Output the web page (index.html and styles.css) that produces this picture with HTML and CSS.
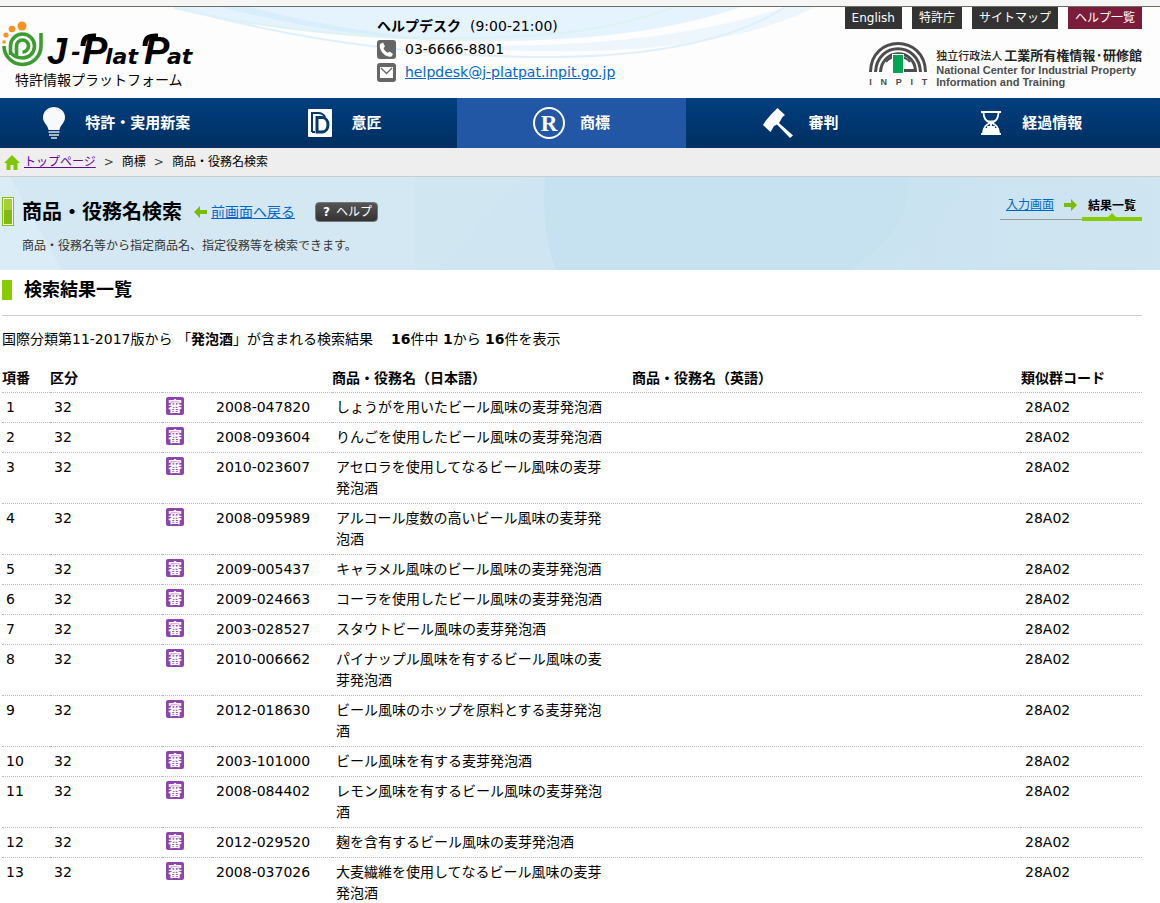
FILE: index.html
```html
<!DOCTYPE html>
<html lang="ja">
<head>
<meta charset="utf-8">
<title>商品・役務名検索 結果一覧 | J-PlatPat</title>
<link rel="stylesheet" href="styles.css">
</head>
<body>
<header class="header">
  <svg class="header-wave" viewBox="0 0 700 60" aria-hidden="true">
    <path d="M12 0C120 26 220 35 340 34C450 33 520 20 582 0Z" fill="#e4f3fd"/>
    <path d="M60 0C140 20 200 29 270 33C200 24 140 14 90 0Z" fill="#d8eefb"/>
    <path d="M14 1C110 24 220 33 320 31S470 16 515 0" fill="none" stroke="#dff2f2" stroke-width="2"/>
    <path d="M270 37C380 42 520 36 625 0H655C560 50 380 50 270 37Z" fill="#eef6fd"/>
    <path d="M20 1C150 37 280 50 390 50S580 30 625 0" fill="none" stroke="#dff0fc" stroke-width="2"/>
  </svg>
  <a class="brand" href="#" aria-label="J-PlatPat">
    <svg class="brand-logo" width="196" height="50" viewBox="0 0 196 50" aria-hidden="true">
      <g fill="#f7931e"><circle cx="22" cy="6" r="4.500"/><circle cx="12" cy="9" r="3.300"/><circle cx="6" cy="15" r="2.600"/><circle cx="4" cy="22" r="1.800"/></g>
      <g fill="none" stroke="#3b9c2f" stroke-width="3.600">
        <path d="M41 13V26A18.500 18.500 0 0 1 4 26"/>
        <path d="M10.500 35V26A12 12 0 1 1 22.500 38Q15 38 11 33"/>
        <path d="M16.500 36V26A6 6 0 1 1 22.500 32"/>
      </g>
      <g class="brand-letters">
        <path d="M83 26C83 17 88 15.500 96 16" fill="none" stroke="#000" stroke-width="5"/>
        <path d="M145 26C145 17 150 15.500 158 16" fill="none" stroke="#000" stroke-width="5"/>
        <text x="47" y="44" font-size="36">J</text>
        <text x="71" y="41" font-size="28">-</text>
        <text x="82" y="44" font-size="38">P</text>
        <text class="brand-small" x="105" y="44">lat</text>
        <text x="144" y="44" font-size="38">P</text>
        <text class="brand-small" x="167" y="44">at</text>
      </g>
    </svg>
    <span class="brand-sub">特許情報プラットフォーム</span>
  </a>
  <address class="contact">
    <p class="contact-line"><strong>ヘルプデスク</strong><span>(9:00-21:00)</span></p>
    <p class="contact-line contact-item">
      <svg width="19" height="19" viewBox="0 0 19 19" aria-hidden="true"><rect width="19" height="19" rx="3" fill="#666"/><path d="M3 4L6 2.500L8 6.500L6.500 8C7 10 9 12 11 12.800L12.500 11.500L16 14L14.500 16.500C8 18 1.500 10 3 4Z" fill="#fff"/></svg>
      <span>03-6666-8801</span></p>
    <p class="contact-line contact-item">
      <svg width="19" height="19" viewBox="0 0 19 19" aria-hidden="true"><rect width="19" height="19" rx="3" fill="#666"/><rect x="3" y="4" width="13" height="11" fill="#fff"/><path d="M4 5L9.500 10.500L15 5" fill="none" stroke="#666" stroke-width="1.300"/></svg>
      <a href="#">helpdesk@j-platpat.inpit.go.jp</a></p>
  </address>
  <div class="header-side">
    <nav class="utility">
      <a href="#">English</a><a href="#">特許庁</a><a href="#">サイトマップ</a><a class="utility-help" href="#">ヘルプ一覧</a>
    </nav>
    <a class="inpit" href="#">
      <span class="inpit-mark">
        <svg width="58" height="31" viewBox="0 0 58 31" aria-hidden="true">
          <g fill="none" stroke="#4d4d4d" stroke-width="3"><path d="M1.500 30C2 -8 56 -8 56.500 30"/><path d="M6.500 30C8 -1 50 -1 51.500 30"/><path d="M11.500 30C13 6 45 6 46.500 28.500H35"/><path d="M17 20C22 13 36 13 41 20" stroke-width="2"/></g>
          <rect x="23.500" y="12.500" width="11" height="19" fill="#00a651" stroke="#fff"/>
        </svg>
        <span class="inpit-name"><span>I</span><span>N</span><span>P</span><span>I</span><span>T</span></span>
      </span>
      <span class="inpit-text">
        <span class="inpit-ja"><span>独立行政法人</span><strong>工業所有権情報·研修館</strong></span>
        <span class="inpit-en">National Center for Industrial Property</span>
        <span class="inpit-en">Information and Training</span>
      </span>
    </a>
  </div>
</header>

<nav class="main-nav">
  <a href="#"><svg width="32" height="32" viewBox="-5 0 32 32" aria-hidden="true"><path d="M5.500 23C5 18 0 16 0 10.500A11 10.500 0 0 1 22 10.500C22 16 17 18 16.500 23Z" fill="#f7f9fb"/><path d="M5.500 25H16.500M6 28H16M8 31H14" stroke="#dce3ec" stroke-width="1.600"/></svg>特許・実用新案</a>
  <a href="#"><svg width="32" height="28" viewBox="-4 0 32 28" aria-hidden="true"><rect width="24" height="28" rx="1" fill="#fff"/><path d="M4 23V4H10C14 4 16 6 17 8" fill="none" stroke="#03396f" stroke-width="2"/><path d="M4 23H7" stroke="#03396f" stroke-width="2"/><path d="M9 8.500H14C22 8.500 22 23 14 23H9Z" fill="none" stroke="#03396f" stroke-width="3"/></svg>意匠</a>
  <a class="is-active" href="#" aria-current="page"><svg width="32" height="32" viewBox="0 0 32 32" aria-hidden="true"><circle cx="16" cy="16" r="15" fill="none" stroke="#fff" stroke-width="2"/><text class="nav-r" x="16" y="24" text-anchor="middle">R</text></svg>商標</a>
  <a href="#"><svg width="32" height="32" viewBox="0 0 32 32" aria-hidden="true"><path d="M15.500 1L23 8L20.500 10L17 16L31 28.500L28 31L15 17.500L12 19L8.500 25L1 18L3.500 14L9.500 7Z" fill="#fff"/></svg>審判</a>
  <a href="#"><svg width="32" height="24" viewBox="-6 0 32 24" aria-hidden="true"><path d="M0 1H20M0 23H20" stroke="#fff" stroke-width="2"/><path d="M2.500 2C3 9 6 10 9 12C5 14 2.500 16 2 22M17.500 2C17 9 14 10 11 12C15 14 17.500 16 18 22M10 12V17M6 16H14" fill="none" stroke="#fff" stroke-width="1.800"/><path d="M5 9.500H15L10 13ZM3 17H17L18 23H2Z" fill="#fff"/></svg>経過情報</a>
</nav>

<nav class="crumbs">
  <svg width="16" height="15" viewBox="0 0 16 15" aria-hidden="true"><path d="M8 0L16 8H13.500V15H9.500V10H6.500V15H2.500V8H0Z" fill="#7fc800"/></svg>
  <a href="#">トップページ</a><span class="crumb-sep">&gt;</span><span>商標</span><span class="crumb-sep">&gt;</span><span>商品・役務名検索</span>
</nav>

<section class="title-band">
  <svg class="band-shade" viewBox="0 0 1160 92" preserveAspectRatio="none" aria-hidden="true">
    <path d="M0 0H10L62 92H0Z" fill="#daecf6"/>
    <path d="M415 0H522L440 92H415Z" fill="#d0e6f1"/>
    <path d="M522 0L440 92H556L545 0Z" fill="#cfe6f2"/>
    <path d="M545 0C542 34 546 66 556 92H850C900 58 912 28 908 0Z" fill="#c6e1f0"/>
    <path d="M908 0C912 28 900 58 850 92H890L975 0Z" fill="#cae3f1"/>
  </svg>
  <div class="title-main">
    <span class="title-bar"></span>
    <div>
      <div class="title-row">
        <h1>商品・役務名検索</h1>
        <svg width="13" height="12" viewBox="0 0 13 12" aria-hidden="true"><path d="M0 6L6 0V4H13V8H6V12Z" fill="#7bbd00"/></svg>
        <a href="#">前画面へ戻る</a>
        <button class="help" type="button"><span class="help-mark">?</span>ヘルプ</button>
      </div>
      <p class="lead">商品・役務名等から指定商品名、指定役務等を検索できます。</p>
    </div>
  </div>
  <ol class="steps">
    <li><a href="#">入力画面</a><svg width="13" height="12" viewBox="0 0 13 12" aria-hidden="true"><path d="M13 6L7 0V4H0V8H7V12Z" fill="#7bbd00"/></svg></li>
    <li class="is-current">結果一覧</li>
  </ol>
</section>

<main class="results">
  <h2>検索結果一覧</h2>
  <p class="summary"><span>国際分類第11-2017版から 「<b>発泡酒</b>」が含まれる検索結果</span><span><b>16</b>件中 <b>1</b>から <b>16</b>件を表示</span></p>
  <table>
    <colgroup><col class="c-no"><col class="c-class"><col class="c-mark"><col class="c-id"><col class="c-ja"><col><col class="c-code"></colgroup>
    <thead><tr><th>項番</th><th>区分</th><th></th><th></th><th>商品・役務名（日本語）</th><th>商品・役務名（英語）</th><th>類似群コード</th></tr></thead>
    <tbody>
      <tr><td>1</td><td>32</td><td><span class="mark">審</span></td><td>2008-047820</td><td>しょうがを用いたビール風味の麦芽発泡酒</td><td></td><td>28A02</td></tr>
      <tr><td>2</td><td>32</td><td><span class="mark">審</span></td><td>2008-093604</td><td>りんごを使用したビール風味の麦芽発泡酒</td><td></td><td>28A02</td></tr>
      <tr><td>3</td><td>32</td><td><span class="mark">審</span></td><td>2010-023607</td><td>アセロラを使用してなるビール風味の麦芽発泡酒</td><td></td><td>28A02</td></tr>
      <tr><td>4</td><td>32</td><td><span class="mark">審</span></td><td>2008-095989</td><td>アルコール度数の高いビール風味の麦芽発泡酒</td><td></td><td>28A02</td></tr>
      <tr><td>5</td><td>32</td><td><span class="mark">審</span></td><td>2009-005437</td><td>キャラメル風味のビール風味の麦芽発泡酒</td><td></td><td>28A02</td></tr>
      <tr><td>6</td><td>32</td><td><span class="mark">審</span></td><td>2009-024663</td><td>コーラを使用したビール風味の麦芽発泡酒</td><td></td><td>28A02</td></tr>
      <tr><td>7</td><td>32</td><td><span class="mark">審</span></td><td>2003-028527</td><td>スタウトビール風味の麦芽発泡酒</td><td></td><td>28A02</td></tr>
      <tr><td>8</td><td>32</td><td><span class="mark">審</span></td><td>2010-006662</td><td>パイナップル風味を有するビール風味の麦芽発泡酒</td><td></td><td>28A02</td></tr>
      <tr><td>9</td><td>32</td><td><span class="mark">審</span></td><td>2012-018630</td><td>ビール風味のホップを原料とする麦芽発泡酒</td><td></td><td>28A02</td></tr>
      <tr><td>10</td><td>32</td><td><span class="mark">審</span></td><td>2003-101000</td><td>ビール風味を有する麦芽発泡酒</td><td></td><td>28A02</td></tr>
      <tr><td>11</td><td>32</td><td><span class="mark">審</span></td><td>2008-084402</td><td>レモン風味を有するビール風味の麦芽発泡酒</td><td></td><td>28A02</td></tr>
      <tr><td>12</td><td>32</td><td><span class="mark">審</span></td><td>2012-029520</td><td>麹を含有するビール風味の麦芽発泡酒</td><td></td><td>28A02</td></tr>
      <tr><td>13</td><td>32</td><td><span class="mark">審</span></td><td>2008-037026</td><td>大麦繊維を使用してなるビール風味の麦芽発泡酒</td><td></td><td>28A02</td></tr>
    </tbody>
  </table>
</main>
</body>
</html>
```
FILE: styles.css
```css
* { box-sizing: border-box; }
body {
  margin: 0;
  padding-top: 6px;
  background: linear-gradient(#f6f6f6 6px, #fff 6px);
  color: #000;
  font: 14px/21px "DejaVu Sans", "Noto Sans CJK JP", sans-serif;
}
h1, h2, p, ol { margin: 0; padding: 0; }
a { color: #0066cc; }
svg { flex: none; overflow: visible; }

.header {
  position: relative;
  display: grid;
  grid-template-columns: 377px 1fr auto;
  min-height: 92px;
  padding-right: 18px;
  border-top: 1px solid #6b7064;
  background: #fdfdfd;
}
.header-wave { position: absolute; top: 0; left: 160px; width: 700px; height: 60px; overflow: hidden; }
.brand, .contact, .header-side { position: relative; }
.brand { padding-top: 13px; color: #000; text-decoration: none; }
.brand-logo { display: block; }
.brand-letters { font-family: "Liberation Sans", sans-serif; font-weight: 700; font-style: italic; }
.brand-small { font: italic 700 22px "DejaVu Sans", sans-serif; }
.brand-sub { display: block; padding-left: 15px; line-height: 20px; }
.contact { padding-top: 8px; font-style: normal; }
.contact-line { display: flex; align-items: center; gap: 9px; min-height: 23px; }
.header-side { display: flex; flex-direction: column; align-items: flex-end; gap: 13px; }
.utility { display: flex; gap: 10px; }
.utility a { padding: 0 7px; background: #333; color: #fff; font-size: 12px; line-height: 22px; text-decoration: none; }
.utility .utility-help { background: #7a1c3a; }
.inpit { display: flex; gap: 9px; color: #4d4d4d; text-decoration: none; }
.inpit-mark { width: 58px; }
.inpit-mark svg { display: block; }
.inpit-name { display: flex; justify-content: space-between; padding-top: 3px; font: bold 9px/12px "Liberation Sans", sans-serif; }
.inpit-text { padding-top: 4px; }
.inpit-ja { display: flex; align-items: center; gap: 2px; color: #222; font: 500 11px/18px "Noto Sans CJK JP", sans-serif; }
.inpit-ja strong { font-size: 13px; font-weight: 700; }
.inpit-en { display: block; font: bold 11px/12px "Liberation Sans", sans-serif; }

.main-nav {
  display: grid;
  grid-template-columns: repeat(5, 1fr);
  min-height: 50px;
  padding-right: 17px;
  background: linear-gradient(#003f7f, #002f61);
}
.main-nav a { display: flex; align-items: center; justify-content: center; gap: 15px; color: #fff; font-size: 15px; font-weight: 700; text-decoration: none; }
.main-nav .is-active { background: #2257a5; }
.nav-r { fill: #fff; font: bold 23px "Liberation Serif", serif; }

.crumbs { display: flex; align-items: center; gap: 4px; min-height: 29px; padding: 0 4px; border-bottom: 1px solid #ccc; background: #eee; font-size: 12px; }
.crumbs a { color: #609; }
.crumb-sep { padding: 0 4px; color: #444; }

.title-band { position: relative; display: flex; justify-content: space-between; min-height: 93px; padding: 18px 18px 0 2px; background: linear-gradient(90deg, #d4e8f3 50%, #cbe3f0 80%, #cfe5f1); }
.band-shade { position: absolute; inset: 0; width: 100%; height: 100%; }
.title-main, .steps { position: relative; }
.title-main { display: flex; gap: 8px; }
.title-bar { width: 12px; height: 29px; margin-top: 2px; border: 1px solid #84c400; background: linear-gradient(#a6cf38 45%, #80ba10 45%); box-shadow: inset 0 0 0 1px #fff; }
.title-row { display: flex; align-items: center; min-height: 34px; }
.title-row h1 { font-size: 20px; line-height: 34px; margin-right: 12px; }
.title-row a { margin: 0 20px 0 4px; }
.help { display: flex; align-items: center; gap: 6px; height: 20px; padding: 0 5px 0 7px; border: 1px solid #777; border-radius: 4px; background: linear-gradient(#555, #333); color: #fff; font: 12px/18px "DejaVu Sans", "Noto Sans CJK JP", sans-serif; }
.help-mark { font-weight: 700; }
.lead { color: #333; font-size: 12px; line-height: 34px; }
.steps { display: flex; align-items: flex-start; list-style: none; font-size: 12px; line-height: 21px; }
.steps li { display: flex; align-items: center; gap: 10px; height: 25px; padding: 0 5px 4px 6px; border-bottom: 1px solid #999; }
.steps .is-current { position: relative; padding: 0 6px; height: 26px; border-bottom: 4px solid #8c0; font-weight: 700; }
.steps .is-current::after { content: ""; position: absolute; bottom: 0; left: 26px; border: 4px solid transparent; border-top-width: 0; border-bottom-color: #8c0; }

.results { padding: 10px 18px 0 2px; background: #fff; }
.results h2 { margin-bottom: 15px; padding-left: 12px; border-left: 10px solid #8c0; font-size: 18px; line-height: 20px; }
.summary { display: flex; gap: 18px; padding-top: 13px; border-top: 1px solid #ccc; }
table { width: 100%; margin-top: 18px; border-collapse: collapse; table-layout: fixed; }
.c-no { width: 48px; }
.c-class { width: 112px; }
.c-mark { width: 50px; }
.c-id { width: 120px; }
.c-ja { width: 300px; }
.c-code { width: 121px; }
th { padding: 0 0 3px; text-align: left; white-space: nowrap; }
td { padding: 4px; vertical-align: top; }
td:nth-child(5) { padding-right: 26px; }
tr { border-bottom: 1px dotted #bbb; }
.mark { display: block; width: 18px; height: 18px; border-radius: 2px; background: #8e44ad; color: #fff; font-size: 14px; font-weight: 700; line-height: 18px; text-align: center; }
```
